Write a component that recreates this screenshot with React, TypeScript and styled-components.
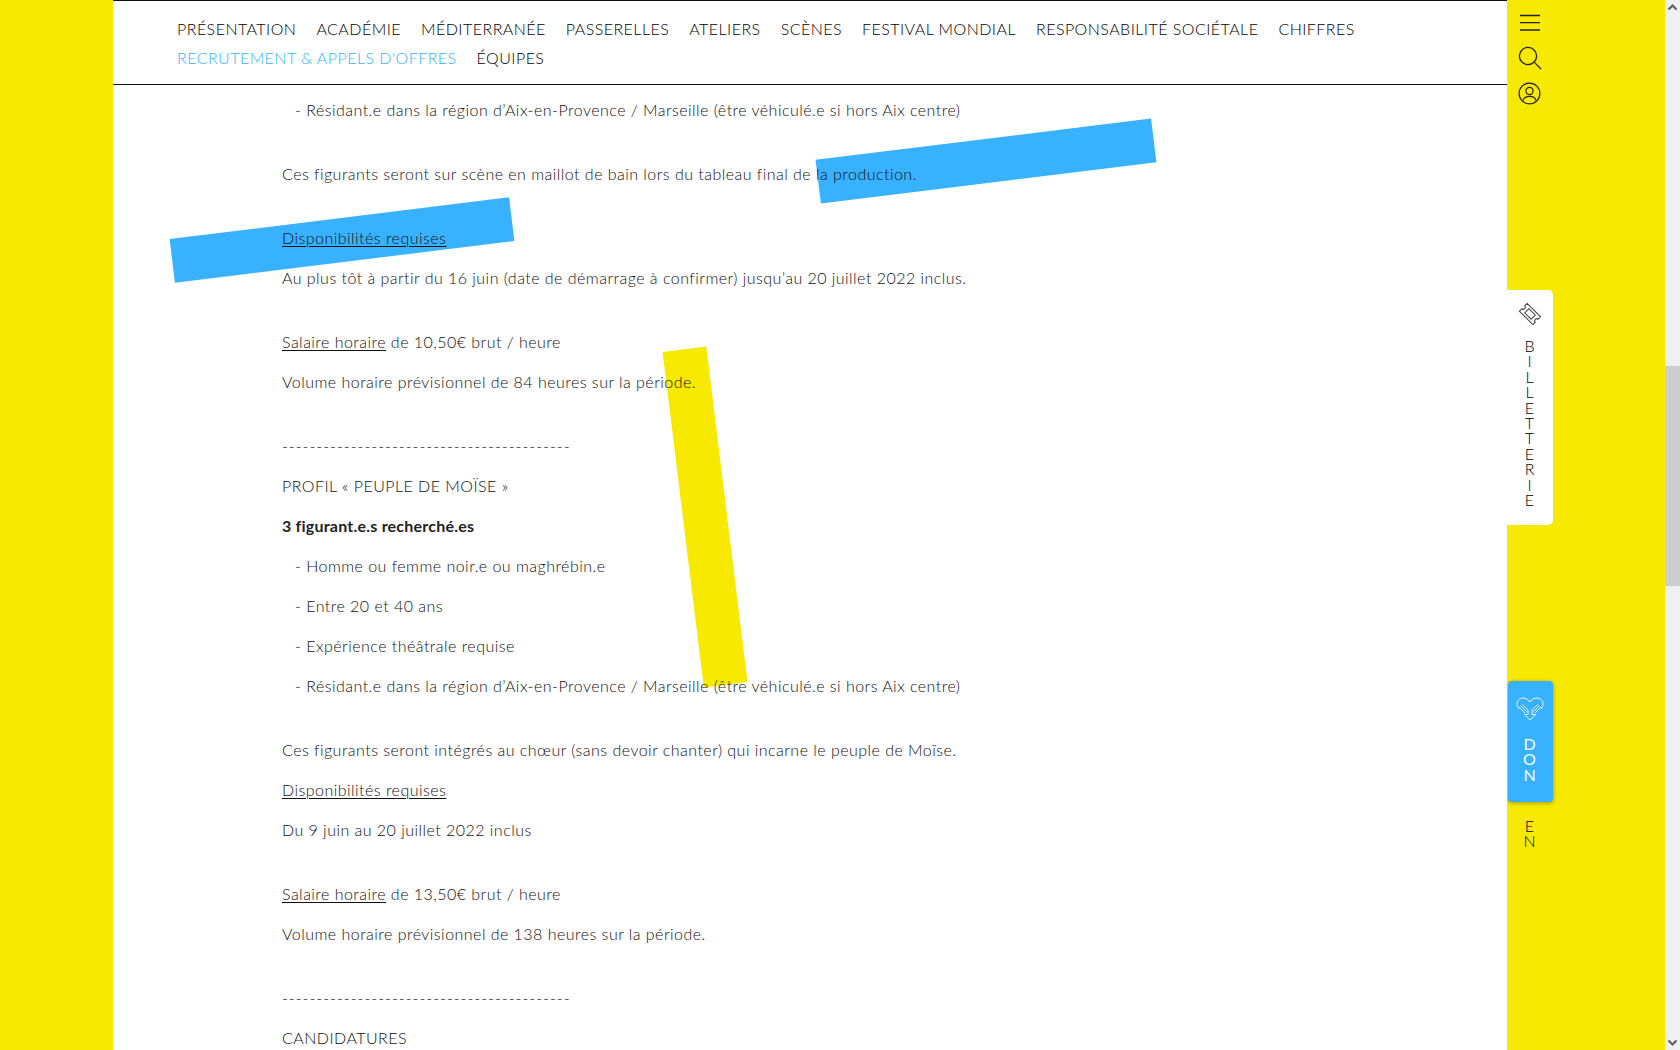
import React from "react";
import styled, { createGlobalStyle } from "styled-components";

const yellow = "#f7e900";
const blue = "#38b1ff";

const Global = createGlobalStyle`
  html, body { margin: 0; padding: 0; height: 100%; overflow: hidden; background: ${yellow}; }
  * { box-sizing: border-box; }
  body { font-family: Lato, "Noto Sans", sans-serif; }
`;

const Page = styled.div`
  width: 1680px;
  height: 1050px;
  display: flex;
  overflow: hidden;
  background: ${yellow};
`;
const SideBand = styled.div`
  width: 113px;
  flex: none;
  background: ${yellow};
`;
const Main = styled.main`
  position: relative;
  width: 1394px;
  flex: none;
  background: #fff;
  overflow: hidden;
`;
const Header = styled.nav`
  height: 85px;
  border-top: 1px solid #111;
  border-bottom: 1px solid #111;
  padding: 13px 64px 0;
  display: flex;
  flex-wrap: wrap;
  align-content: flex-start;
  column-gap: 20px;
  position: relative;
  z-index: 2;
`;
const NavItem = styled.a<{ $active?: boolean }>`
  font-size: 16px;
  line-height: 29px;
  font-weight: 300;
  letter-spacing: 0.46px;
  color: ${(p) => (p.$active ? blue : "#000")};
  white-space: nowrap;
`;
const Bar = styled.div<{ $left: number; $top: number; $w: number; $h: number; $color: string }>`
  position: absolute;
  left: ${(p) => p.$left}px;
  top: ${(p) => p.$top}px;
  width: ${(p) => p.$w}px;
  height: ${(p) => p.$h}px;
  background: ${(p) => p.$color};
  transform: rotate(-7deg);
  z-index: 0;
`;
const Content = styled.article`
  position: relative;
  z-index: 1;
  padding: 13px 0 0 169px;
  width: 1240px;
`;
const Para = styled.p<{ $gap?: boolean; $indent?: boolean; $bold?: boolean; $dashes?: boolean }>`
  margin: 0 0 ${(p) => (p.$gap ? 40 : 16)}px;
  padding-left: ${(p) => (p.$indent ? 13 : 0)}px;
  font-size: 16px;
  line-height: 24px;
  letter-spacing: ${(p) => (p.$dashes ? 0.95 : p.$bold ? 0.22 : 0.47)}px;
  color: ${(p) => (p.$bold ? "#222" : "#111")};
  font-weight: ${(p) => (p.$bold ? 700 : 300)};
  white-space: nowrap;
`;
const Under = styled.span`
  text-decoration: underline;
  text-underline-offset: 2px;
  text-decoration-thickness: 1px;
`;
const Rail = styled.aside`
  width: 158px;
  flex: none;
  background: ${yellow};
`;
const RailColumn = styled.div`
  width: 46px;
  display: flex;
  flex-direction: column;
  align-items: center;
`;
const IconSlot = styled.div<{ $mt: number }>`
  margin-top: ${(p) => p.$mt}px;
  margin-right: 1px;
  line-height: 0;
`;
const TicketCard = styled.a`
  margin-top: 185px;
  width: 46px;
  height: 235px;
  background: #fff;
  border-radius: 0 5px 5px 0;
  padding-top: 12px;
  display: flex;
  flex-direction: column;
  align-items: center;
`;
const Vertical = styled.span<{ $color: string; $weight?: number }>`
  writing-mode: vertical-rl;
  text-orientation: upright;
  font-size: 16px;
  line-height: 16px;
  margin-right: 2px;
  letter-spacing: -3.6px;
  color: ${(p) => p.$color};
  font-weight: ${(p) => p.$weight ?? 300};
`;
const TicketText = styled(Vertical)`
  margin-top: 10px;
`;
const DonCard = styled.a`
  margin-top: 156px;
  width: 45px;
  height: 121px;
  background: ${blue};
  border-radius: 4px;
  box-shadow: 0 1px 4px rgba(0, 0, 0, 0.35);
  padding-top: 16px;
  display: flex;
  flex-direction: column;
  align-items: center;
`;
const DonText = styled(Vertical)`
  margin-top: 13px;
`;
const LangText = styled(Vertical)`
  margin-top: 14px;
`;
const ScrollTrack = styled.div`
  width: 15px;
  flex: none;
  background: #f0f0f0;
  display: flex;
  flex-direction: column;
`;
const ScrollArrow = styled.div`
  height: 15px;
  line-height: 0;
`;
const ScrollThumb = styled.div`
  margin-top: 351px;
  height: 220px;
  background: #cdcdcd;
`;
const ScrollArrowBottom = styled(ScrollArrow)`
  margin-top: auto;
`;

const nav = [
  "PRÉSENTATION", "ACADÉMIE", "MÉDITERRANÉE", "PASSERELLES", "ATELIERS", "SCÈNES",
  "FESTIVAL MONDIAL", "RESPONSABILITÉ SOCIÉTALE", "CHIFFRES",
];

const Burger = () => (
  <svg width="22" height="17" viewBox="0 0 22 17" fill="none" stroke="#222" strokeWidth="1.3">
    <path d="M1 1.5h20M1 8.700h20M1 16h20" />
  </svg>
);
const Search = () => (
  <svg width="24" height="24" viewBox="0 0 24 24" fill="none" stroke="#222" strokeWidth="1.3">
    <circle cx="10" cy="10" r="8.600" />
    <path d="M16.400 16.400L23 23" />
  </svg>
);
const User = () => (
  <svg width="23" height="23" viewBox="0 0 23 23" fill="none" stroke="#222" strokeWidth="1.2">
    <circle cx="11.500" cy="11.500" r="10.400" />
    <circle cx="11.500" cy="9" r="3.600" />
    <path d="M4.800 19c.6-3 3-4.700 6.700-4.700s6.100 1.700 6.700 4.700" />
  </svg>
);
const Ticket = () => (
  <svg width="24" height="24" viewBox="0 0 24 24" fill="none" stroke="#444" strokeWidth="1">
    <g transform="rotate(45 12 12)">
      <path d="M2.500 6.500h19v3.500a2 2 0 0 0 0 4v3.500h-19V14a2 2 0 0 0 0-4z" />
      <rect x="7.500" y="9" width="9" height="6" />
    </g>
  </svg>
);
const Hands = () => (
  <svg width="28" height="24" viewBox="0 0 28 24" fill="none" stroke="#fff" strokeWidth="0.9">
    <path d="M14 23l-5.500-5.500M14 23l5.500-5.500M14 5C12 2 9.500 1 7 1 3.500 1 1 3.500 1 7c0 2 .8 3.500 2 5M14 5c2-3 4.500-4 7-4 3.500 0 6 2.500 6 6 0 2-.8 3.500-2 5" />
    <path d="M3 10l6 6M4.500 8.500l6 6M6.500 7.500l5.500 5.500M12 13v4.500l-3.500 0M25 10l-6 6M23.500 8.500l-6 6M21.500 7.500L16 13M16 13v4.500l3.500 0" />
  </svg>
);
const Chevron = ({ up }: { up?: boolean }) => (
  <svg width="15" height="15" viewBox="0 0 15 15" fill="none" stroke="#606060" strokeWidth="2.2">
    <path d={up ? "M3.500 9.500l4-4 4 4" : "M3.500 5.500l4 4 4-4"} />
  </svg>
);

export default function App() {
  return (
    <Page>
      <Global />
      <SideBand />
      <Main>
        <Header>
          {nav.map((n) => (
            <NavItem key={n}>{n}</NavItem>
          ))}
          <NavItem $active>RECRUTEMENT &amp; APPELS D'OFFRES</NavItem>
          <NavItem>ÉQUIPES</NavItem>
        </Header>
        <Bar $left={703.5} $top={138.6} $w={338} $h={44.4} $color={blue} />
        <Bar $left={58} $top={217.6} $w={342.4} $h={44.4} $color={blue} />
        <Bar $left={569.8} $top={348.4} $w={44.2} $h={337.6} $color={yellow} />
        <Content>
          <Para $gap $indent>- Résidant.e dans la région d’Aix-en-Provence / Marseille (être véhiculé.e si hors Aix centre)</Para>
          <Para $gap>Ces figurants seront sur scène en maillot de bain lors du tableau final de la production.</Para>
          <Para><Under>Disponibilités requises</Under></Para>
          <Para $gap>Au plus tôt à partir du 16 juin (date de démarrage à confirmer) jusqu’au 20 juillet 2022 inclus.</Para>
          <Para><Under>Salaire horaire</Under> de 10,50€ brut / heure</Para>
          <Para $gap>Volume horaire prévisionnel de 84 heures sur la période.</Para>
          <Para $dashes>------------------------------------------</Para>
          <Para>PROFIL « PEUPLE DE MOÏSE »</Para>
          <Para $bold>3 figurant.e.s recherché.es</Para>
          <Para $indent>- Homme ou femme noir.e ou maghrébin.e</Para>
          <Para $indent>- Entre 20 et 40 ans</Para>
          <Para $indent>- Expérience théâtrale requise</Para>
          <Para $gap $indent>- Résidant.e dans la région d’Aix-en-Provence / Marseille (être véhiculé.e si hors Aix centre)</Para>
          <Para>Ces figurants seront intégrés au chœur (sans devoir chanter) qui incarne le peuple de Moïse.</Para>
          <Para><Under>Disponibilités requises</Under></Para>
          <Para $gap>Du 9 juin au 20 juillet 2022 inclus</Para>
          <Para><Under>Salaire horaire</Under> de 13,50€ brut / heure</Para>
          <Para $gap>Volume horaire prévisionnel de 138 heures sur la période.</Para>
          <Para $dashes>------------------------------------------</Para>
          <Para>CANDIDATURES</Para>
        </Content>
      </Main>
      <Rail>
        <RailColumn>
          <IconSlot $mt={14}><Burger /></IconSlot>
          <IconSlot $mt={15}><Search /></IconSlot>
          <IconSlot $mt={12}><User /></IconSlot>
          <TicketCard>
            <Ticket />
            <TicketText $color="#000">BILLETTERIE</TicketText>
          </TicketCard>
          <DonCard>
            <Hands />
            <DonText $color="#fff" $weight={400}>DON</DonText>
          </DonCard>
          <LangText $color="#000">EN</LangText>
        </RailColumn>
      </Rail>
      <ScrollTrack>
        <ScrollArrow><Chevron up /></ScrollArrow>
        <ScrollThumb />
        <ScrollArrowBottom><Chevron /></ScrollArrowBottom>
      </ScrollTrack>
    </Page>
  );
}
